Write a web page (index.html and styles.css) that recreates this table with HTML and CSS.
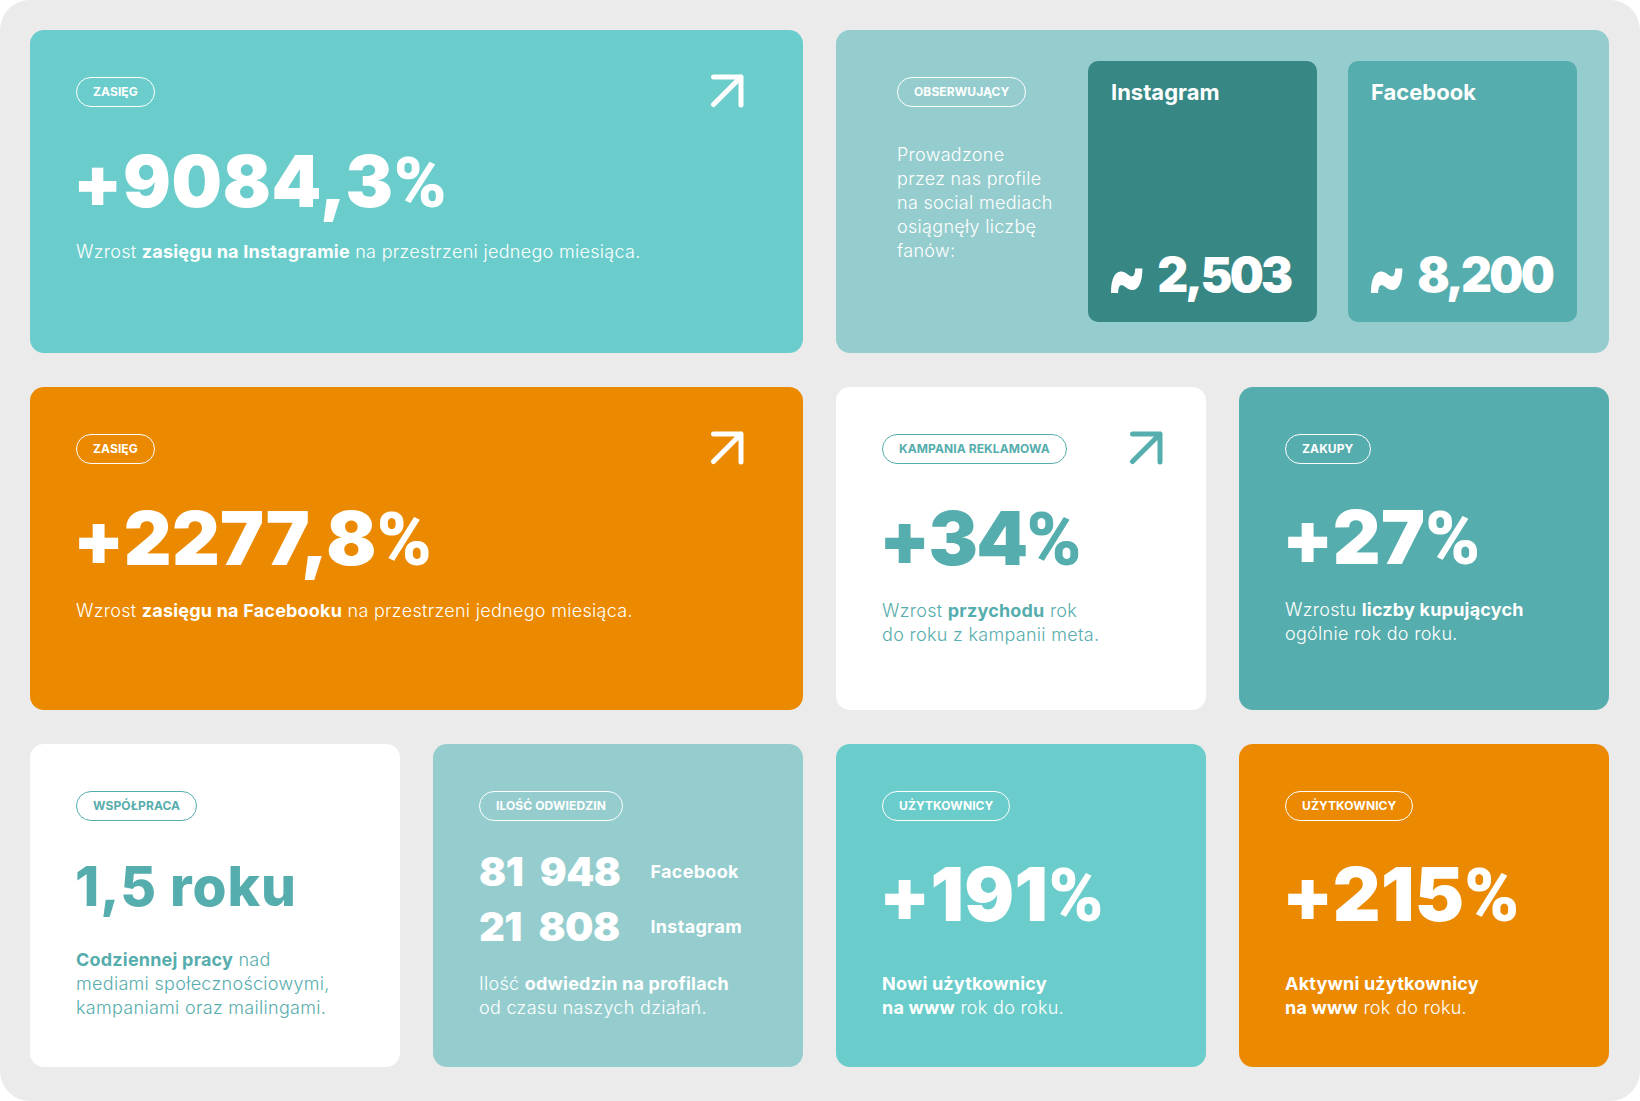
FILE: index.html
```html
<!DOCTYPE html>
<html lang="pl">
<head>
<meta charset="utf-8">
<title>Statystyki</title>
<link rel="stylesheet" href="styles.css">
</head>
<body>
<main class="board">

  <section class="card card--wide bg-aqua">
    <div class="card-head">
      <span class="pill">ZASIĘG</span>
      <svg class="arrow arrow--wide" viewBox="0 0 34 34" aria-hidden="true"><path d="M3.5 3 H31 V31 M31 3 L3.5 30.5"/></svg>
    </div>
    <div class="big big--a">+9084,3<span class="pct">%</span></div>
    <p class="desc">Wzrost <b>zasięgu na Instagramie</b> na przestrzeni jednego miesiąca.</p>
  </section>

  <section class="card card--wide card--fans bg-mist">
    <div class="fans-intro">
      <span class="pill">OBSERWUJĄCY</span>
      <p class="desc fans-text">Prowadzone<br>przez nas profile<br>na social mediach<br>osiągnęły liczbę<br>fanów:</p>
    </div>
    <div class="fan-box bg-deep">
      <span class="fan-title">Instagram</span>
      <span class="fan-num"><span class="tilde">~</span>2,503</span>
    </div>
    <div class="fan-box bg-teal">
      <span class="fan-title">Facebook</span>
      <span class="fan-num"><span class="tilde">~</span>8,200</span>
    </div>
  </section>

  <section class="card card--wide bg-orange">
    <div class="card-head">
      <span class="pill">ZASIĘG</span>
      <svg class="arrow arrow--wide" viewBox="0 0 34 34" aria-hidden="true"><path d="M3.5 3 H31 V31 M31 3 L3.5 30.5"/></svg>
    </div>
    <div class="big">+2277,8<span class="pct">%</span></div>
    <p class="desc">Wzrost <b>zasięgu na Facebooku</b> na przestrzeni jednego miesiąca.</p>
  </section>

  <section class="card bg-white">
    <div class="card-head">
      <span class="pill">KAMPANIA REKLAMOWA</span>
      <svg class="arrow arrow--narrow" viewBox="0 0 34 34" aria-hidden="true"><path d="M3.5 3 H31 V31 M31 3 L3.5 30.5"/></svg>
    </div>
    <div class="big big--tight">+34<span class="pct">%</span></div>
    <p class="desc">Wzrost <b>przychodu</b> rok<br>do roku z kampanii meta.</p>
  </section>

  <section class="card bg-teal">
    <div class="card-head">
      <span class="pill">ZAKUPY</span>
    </div>
    <div class="big">+27<span class="pct">%</span></div>
    <p class="desc">Wzrostu <b>liczby kupujących</b><br>ogólnie rok do roku.</p>
  </section>

  <section class="card card--bottom bg-white">
    <div class="card-head">
      <span class="pill">WSPÓŁPRACA</span>
    </div>
    <div class="big big--years">1,5 roku</div>
    <p class="desc"><b>Codziennej pracy</b> nad<br>mediami społecznościowymi,<br>kampaniami oraz mailingami.</p>
  </section>

  <section class="card card--bottom bg-mist">
    <div class="card-head">
      <span class="pill">ILOŚĆ ODWIEDZIN</span>
    </div>
    <div class="visits">
      <span class="visits-num">81 948</span><span class="visits-label">Facebook</span>
      <span class="visits-num">21 808</span><span class="visits-label">Instagram</span>
    </div>
    <p class="desc">Ilość <b>odwiedzin na profilach</b><br>od czasu naszych działań.</p>
  </section>

  <section class="card card--bottom bg-aqua">
    <div class="card-head">
      <span class="pill">UŻYTKOWNICY</span>
    </div>
    <div class="big">+191<span class="pct">%</span></div>
    <p class="desc"><b>Nowi użytkownicy<br>na www</b> rok do roku.</p>
  </section>

  <section class="card card--bottom bg-orange">
    <div class="card-head">
      <span class="pill">UŻYTKOWNICY</span>
    </div>
    <div class="big">+215<span class="pct">%</span></div>
    <p class="desc"><b>Aktywni użytkownicy<br>na www</b> rok do roku.</p>
  </section>

</main>
</body>
</html>
```

FILE: styles.css
```css
* { box-sizing: border-box; }

html, body {
  margin: 0;
  padding: 0;
  background: #ffffff;
}

body {
  font-family: Inter, "Noto Sans", "Liberation Sans", sans-serif;
  color: #ffffff;
}

.board {
  width: 1640px;
  height: 1101px;
  background: #ebebeb;
  border-radius: 30px;
  padding: 30px 31px 34px 30px;
  display: grid;
  grid-template-columns: repeat(4, 370px);
  grid-template-rows: repeat(3, 323px);
  column-gap: 33px;
  row-gap: 34px;
}

.card {
  border-radius: 14px;
  padding: 47px 46px;
  display: flex;
  flex-direction: column;
  overflow: hidden;
}

.card--wide { grid-column: span 2; }

.bg-aqua { background: #6bcdcb; }
.bg-mist { background: #95cdce; }
.bg-orange { background: #eb8a00; }
.bg-teal { background: #56adad; }
.bg-deep { background: #378785; }
.bg-white { background: #ffffff; color: #56adad; }

.card-head {
  display: flex;
  justify-content: space-between;
  align-items: flex-start;
}

.pill {
  display: inline-flex;
  align-items: center;
  height: 30px;
  padding: 0 16px;
  border: 1.5px solid currentColor;
  border-radius: 15px;
  font-size: 12px;
  font-weight: 700;
  letter-spacing: 0.1px;
  line-height: 1;
  white-space: nowrap;
}

.arrow {
  width: 34px;
  height: 34px;
  margin-top: -3px;
  fill: none;
  stroke: currentColor;
  stroke-width: 5;
  stroke-linecap: round;
  stroke-linejoin: round;
}
.arrow--wide { margin-right: 13px; }
.arrow--narrow { margin-right: -3px; }

.big {
  margin-top: 36px;
  margin-left: -3px;
  font-size: 74px;
  font-weight: 900;
  line-height: 1;
  letter-spacing: 0.3px;
  white-space: nowrap;
}
.pct {
  font-family: Roboto, Inter, sans-serif;
  font-weight: 900;
  letter-spacing: 0;
}
.big--a {
  margin-top: 38px;
  font-size: 71px;
  letter-spacing: 0.7px;
}
.big--tight {
  letter-spacing: -1.8px;
}
.big--years {
  margin-top: 38px;
  margin-left: -1px;
  font-size: 55px;
  font-weight: 800;
  letter-spacing: 0.9px;
}

.desc {
  margin: 22px 0 0;
  font-size: 18px;
  line-height: 24px;
  font-weight: 300;
  letter-spacing: 0.3px;
}
.desc b { font-weight: 700; letter-spacing: 0.2px; }

.card--bottom .desc { margin-top: auto; }

/* followers card */
.card--fans {
  flex-direction: row;
  padding: 31px 32px 31px 61px;
  gap: 31px;
}
.fans-intro {
  flex: 1;
  padding-top: 16px;
  display: flex;
  flex-direction: column;
  align-items: flex-start;
}
.fans-text {
  margin-top: 36px;
}
.fan-box {
  width: 229px;
  flex: none;
  border-radius: 10px;
  padding: 18px 23px 22px;
  display: flex;
  flex-direction: column;
  justify-content: space-between;
}
.fan-title {
  font-size: 22px;
  font-weight: 700;
  line-height: 1.2;
}
.fan-num {
  display: flex;
  align-items: baseline;
  font-size: 48px;
  font-weight: 900;
  line-height: 1;
  letter-spacing: -2.8px;
  white-space: nowrap;
}
.tilde {
  display: inline-block;
  font-family: Lato, Inter, sans-serif;
  font-size: 64px;
  font-weight: 900;
  letter-spacing: 0;
  margin-left: -3px;
  margin-right: 12px;
  transform: translateY(3px) scaleY(1.9);
}

/* visits */
.visits {
  margin-top: 23px;
  display: grid;
  grid-template-columns: auto auto;
  justify-content: start;
  column-gap: 30px;
  align-items: center;
}
.visits-num {
  font-size: 40px;
  font-weight: 900;
  line-height: 55px;
  letter-spacing: -0.5px;
  word-spacing: 9px;
  white-space: nowrap;
}
.visits-label {
  font-size: 18px;
  font-weight: 700;
  letter-spacing: 0.3px;
}
```
